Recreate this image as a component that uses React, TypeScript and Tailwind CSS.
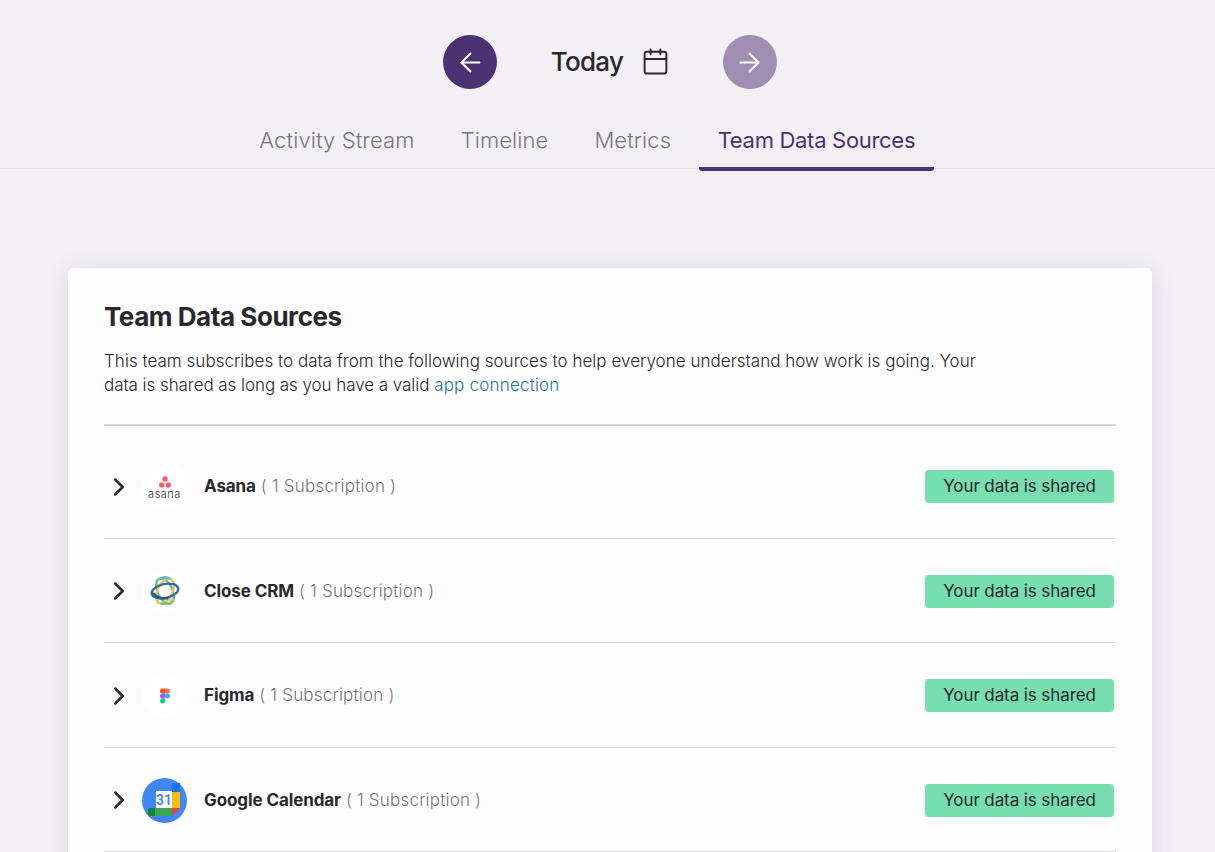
import { ArrowLeft, ArrowRight, Calendar, ChevronRight } from 'lucide-react'
import type { ReactNode } from 'react'

const AsanaLogo = () => (
  <svg width="36" height="26" viewBox="0 0 36 26">
    <circle cx="18" cy="5" r="2.700" fill="#f95d6a" />
    <circle cx="14.700" cy="11" r="2.700" fill="#f95d6a" />
    <circle cx="21.300" cy="11" r="2.700" fill="#f95d6a" />
    <text x="17.500" y="24" textAnchor="middle" fontSize="11" fontWeight="300" fontFamily="Inter, sans-serif" fill="#333" letterSpacing="0.5">
      asana
    </text>
  </svg>
)

const CloseLogo = () => (
  <svg width="32" height="32" viewBox="-1 0 32 32" fill="none" strokeWidth="2.400">
    <ellipse cx="15" cy="16" rx="13.500" ry="7.500" stroke="#5fc27e" transform="rotate(65 15 16)" />
    <ellipse cx="15" cy="16" rx="13.500" ry="7.500" stroke="#f4b860" transform="rotate(115 15 16)" />
    <ellipse cx="15" cy="16" rx="13.500" ry="7" stroke="#2d6da3" transform="rotate(-12 15 16)" />
    <path d="M3 18c4 5 10 6 15 5" stroke="#22588a" />
    <path d="M10 4c3-2 7-2 10 0" stroke="#5cb8d0" />
    <path d="M19 27c2-1 3-2 4-3" stroke="#f4b860" />
    <path d="M11 28c2 1 5 1 7 0" stroke="#5fc27e" />
  </svg>
)

const FigmaLogo = () => (
  <svg width="10" height="16" viewBox="0 0 10 15">
    <path d="M0 2.500A2.500 2.500 0 0 1 2.500 0H5v5H2.500A2.500 2.500 0 0 1 0 2.500z" fill="#f24e1e" />
    <path d="M5 0h2.500a2.500 2.500 0 0 1 0 5H5z" fill="#ff7262" />
    <path d="M0 7.500A2.500 2.500 0 0 1 2.500 5H5v5H2.500A2.500 2.500 0 0 1 0 7.500z" fill="#a259ff" />
    <circle cx="7.500" cy="7.500" r="2.500" fill="#1abcfe" />
    <path d="M0 12.500A2.500 2.500 0 0 1 2.500 10H5v2.500a2.500 2.500 0 0 1-5 0z" fill="#0acf83" />
  </svg>
)

const GoogleCalendarLogo = () => (
  <svg width="45" height="45" viewBox="0 0 45 45">
    <circle cx="22.500" cy="22.500" r="22.500" fill="#4285f4" />
    <rect x="14" y="13" width="16" height="17" fill="#fff" />
    <path d="M30 5h8v9h-8z" fill="#1a73e8" />
    <path d="M30 14h8v16h-8z" fill="#fbbc04" />
    <path d="M6 30h24v8H8a2 2 0 0 1-2-2z" fill="#34a853" />
    <path d="M6 30h7v8H8a2 2 0 0 1-2-2z" fill="#188038" />
    <path d="M30 30h8l-8 8z" fill="#ea4335" />
    <text x="22" y="27" textAnchor="middle" fontSize="14" fontWeight="600" fontFamily="Roboto, sans-serif" fill="#4285f4">
      31
    </text>
  </svg>
)

const sources: { name: string; logo: ReactNode }[] = [
  { name: 'Asana', logo: <AsanaLogo /> },
  { name: 'Close CRM', logo: <CloseLogo /> },
  { name: 'Figma', logo: <FigmaLogo /> },
  { name: 'Google Calendar', logo: <GoogleCalendarLogo /> },
]

const tabs = ['Activity Stream', 'Timeline', 'Metrics', 'Team Data Sources']

export default function App() {
  return (
    <div className="h-[852px] overflow-hidden bg-[#f2f0f5] font-['Inter',sans-serif] text-[#29282d]">
      {/* Header */}
      <div className="flex flex-col items-center border-b border-[#dcd9e4] h-[169px]">
        <div className="flex items-center mt-[35px] ml-[5px] w-[334px] justify-between">
          <button className="size-[54px] rounded-full bg-[#4b3273] flex items-center justify-center text-white">
            <ArrowLeft className="size-[31px]" strokeWidth={1.5} />
          </button>
          <div className="flex items-center gap-[18px] -mt-[2px] ml-[1px]">
            <span className="text-[26px] font-medium tracking-[-0.7px]">Today</span>
            <Calendar className="size-[29px]" strokeWidth={1.6} />
          </div>
          <button className="size-[54px] rounded-full bg-[#a08fb3] flex items-center justify-center text-white">
            <ArrowRight className="size-[31px]" strokeWidth={1.5} />
          </button>
        </div>
        <div className="flex gap-[10px] mt-[25px] mr-[40px] h-[57px]">
          {tabs.map((tab) => (
            <div
              key={tab}
              className={`pt-[10px] h-[57px] text-[22px] whitespace-nowrap ${
                tab === 'Team Data Sources'
                  ? 'px-[18.500px] text-[#4b3273] font-normal tracking-[-0.3px] border-b-[4px] border-[#4b3273] rounded-b-[3px]'
                  : 'px-[18px] text-[#77767c] font-light tracking-[0.1px]'
              }`}
            >
              {tab}
            </div>
          ))}
        </div>
      </div>

      {/* Card */}
      <div className="mt-[99px] mx-[68px] w-[1084px] rounded-[5px] bg-[#fdfdfe] px-[36px] pt-[30px] pb-[40px] shadow-[0_2px_24px_rgba(60,50,90,0.12)]">
        <h2 className="text-[26px] leading-[38px] font-bold tracking-[-0.45px]">Team Data Sources</h2>
        <p className="mt-[13px] w-[890px] text-[17px] leading-[24px] font-light tracking-[0.03px]">
          This team subscribes to data from the following sources to help everyone understand how work is going. Your{' '}
          <span className="tracking-[-0.06px]">data is shared as long as you have a valid</span>{' '}
          <span className="text-[#29788f] tracking-[0.2px]">app connection</span>
        </p>
        <div className="mt-[27px] border-t-2 border-[#d8d5e4] pt-[8px]">
          {sources.map((source) => (
            <div key={source.name} className="flex items-center h-[104.500px] pt-[2px] border-b border-[#d8d5e4]">
              <ChevronRight className="size-[30px] shrink-0" strokeWidth={2} />
              <div className="ml-[8px] size-[45px] rounded-full bg-white flex items-center justify-center shrink-0">
                {source.logo}
              </div>
              <div className="ml-[17px] text-[17px] flex-1">
                <span className="font-bold tracking-[-0.1px]">{source.name}</span>
                <span className="ml-[5px] font-light text-[#77767c] tracking-[0.2px]">( 1 Subscription )</span>
              </div>
              <span className="mr-[2px] w-[189px] h-[33px] rounded-[4px] bg-[#77deb0] flex items-center justify-center text-[17px] tracking-[-0.1px]">
                Your data is shared
              </span>
            </div>
          ))}
        </div>
      </div>
    </div>
  )
}
